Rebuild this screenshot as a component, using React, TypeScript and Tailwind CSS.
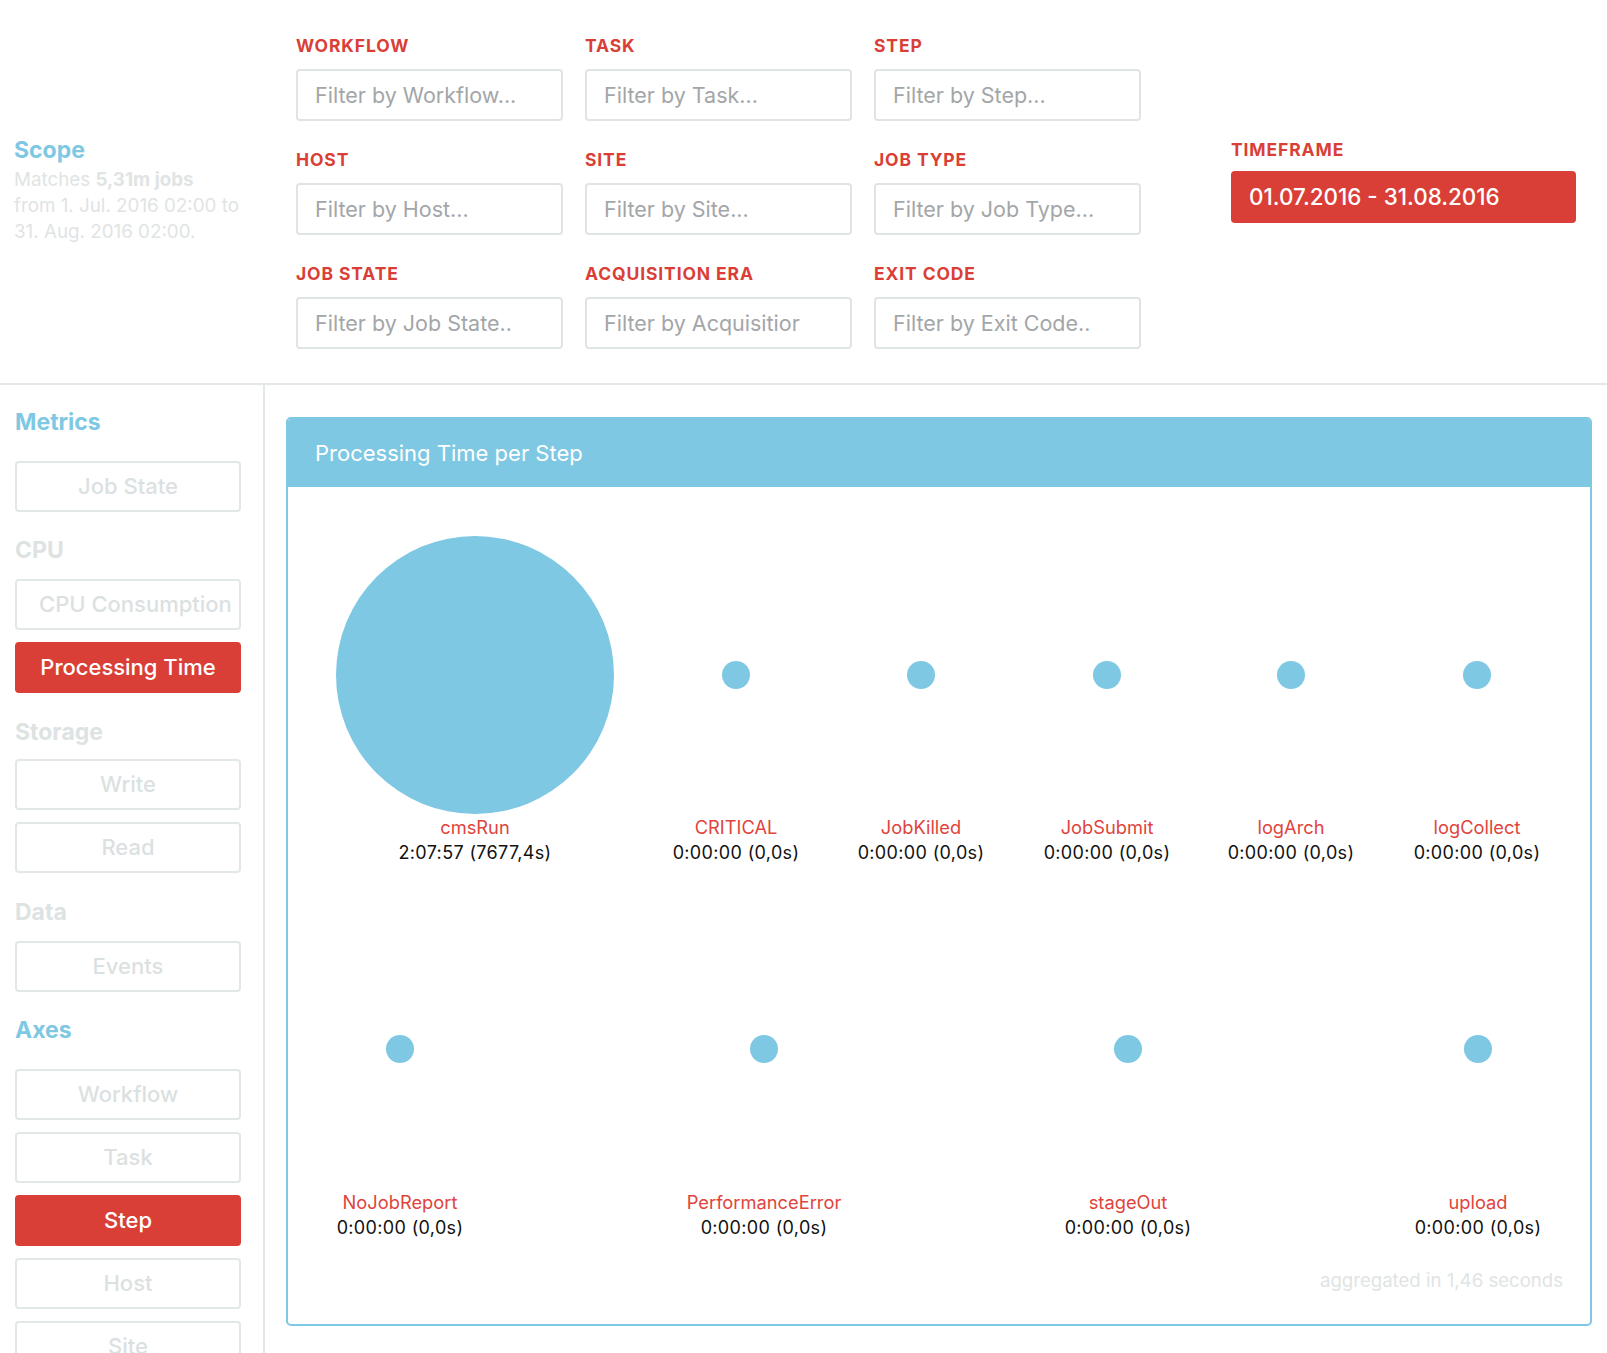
import React from "react";

function FilterField({ label, placeholder }: { label: string; placeholder: string }) {
  return (
    <div className="flex flex-col">
      <div className="h-[20px] leading-[20px] text-[17.5px] font-bold tracking-[0.05em] text-[#d93f36]">{label}</div>
      <div className="mt-[13px] h-[52px] w-[267px] rounded-[4px] border-2 border-[#dfe4e4] pl-[17px] pr-[43px] flex items-center">
        <div className="overflow-hidden whitespace-nowrap text-[21.5px] text-[#a3a6a8]">{placeholder}</div>
      </div>
    </div>
  );
}

function SideButton({ label, active = false, first = false }: { label: string; active?: boolean; first?: boolean }) {
  const base = first ? "" : "mt-[12px] ";
  return (
    <div
      className={
        base +
        (active
          ? "h-[51px] w-[226px] shrink-0 rounded-[4px] bg-[#d93f36] border-2 border-[#d93f36] text-white text-center leading-[47px] text-[22px] font-medium whitespace-nowrap overflow-hidden px-[22px]"
          : "h-[51px] w-[226px] shrink-0 rounded-[4px] border-2 border-[#e2e7e7] text-[#dbe1e1] text-center leading-[47px] text-[22px] font-medium whitespace-nowrap overflow-hidden px-[22px]")
      }
    >
      {label}
    </div>
  );
}

const row1 = [
  { x: 448, name: "CRITICAL" },
  { x: 633, name: "JobKilled" },
  { x: 819, name: "JobSubmit" },
  { x: 1003, name: "logArch" },
  { x: 1189, name: "logCollect" },
];

const row2 = [
  { x: 112, name: "NoJobReport" },
  { x: 476, name: "PerformanceError" },
  { x: 840, name: "stageOut" },
  { x: 1190, name: "upload" },
];

function Label({ x, y, name, value }: { x: number; y: number; name: string; value: string }) {
  return (
    <g>
      <text x={x} y={y} textAnchor="middle" dominantBaseline="central" fill="#e0443c" fontSize="18.3">
        {name}
      </text>
      <text x={x} y={y + 25} textAnchor="middle" dominantBaseline="central" fill="#111111" fontSize="18" letterSpacing="0.35">
        {value}
      </text>
    </g>
  );
}

export default function App() {
  return (
    <div className="w-[1607px] h-[1353px] overflow-hidden bg-white font-['Inter','Liberation_Sans',sans-serif]">
      {/* Top filter area */}
      <div className="flex h-[385px] border-b-2 border-[#e3e8e8]">
        <div className="w-[296px] pl-[14px] pt-[136px]">
          <div className="h-[28px] leading-[28px] text-[23px] font-bold text-[#7ec8e3]">Scope</div>
          <div className="mt-[3px] text-[18.8px] leading-[26px] text-[#dfe4e4]">
            <div>
              Matches <span className="font-bold">5,31m jobs</span>
            </div>
            <div>from 1. Jul. 2016 02:00 to</div>
            <div>31. Aug. 2016 02:00.</div>
          </div>
        </div>
        <div className="grid grid-cols-[267px_267px_267px] gap-x-[22px] gap-y-[29px] pt-[36px] content-start">
          <FilterField label="WORKFLOW" placeholder="Filter by Workflow..." />
          <FilterField label="TASK" placeholder="Filter by Task..." />
          <FilterField label="STEP" placeholder="Filter by Step..." />
          <FilterField label="HOST" placeholder="Filter by Host..." />
          <FilterField label="SITE" placeholder="Filter by Site..." />
          <FilterField label="JOB TYPE" placeholder="Filter by Job Type..." />
          <FilterField label="JOB STATE" placeholder="Filter by Job State.." />
          <FilterField label="ACQUISITION ERA" placeholder="Filter by Acquisitior" />
          <FilterField label="EXIT CODE" placeholder="Filter by Exit Code.." />
        </div>
        <div className="ml-[90px] pt-[140px]">
          <div className="h-[20px] leading-[20px] text-[17.5px] font-bold tracking-[0.05em] text-[#d93f36]">TIMEFRAME</div>
          <div className="mt-[11px] h-[52px] w-[345px] rounded-[4px] bg-[#d93f36] text-white text-[22.4px] font-medium flex items-center pl-[18px]">
            01.07.2016 - 31.08.2016
          </div>
        </div>
      </div>

      {/* Lower area */}
      <div className="flex">
        <div className="w-[265px] h-[968px] border-r-2 border-[#e3e8e8] pl-[15px] pt-[23px] flex flex-col">
          <div className="h-[28px] leading-[28px] text-[23px] font-bold text-[#7ec8e3]">Metrics</div>
          <div className="mt-[25px] flex flex-col">
            <SideButton label="Job State" first />
          </div>
          <div className="mt-[24px] h-[28px] leading-[28px] text-[23px] font-bold text-[#dde3e3]">CPU</div>
          <div className="mt-[15px] flex flex-col">
            <SideButton label="CPU Consumption" first />
            <SideButton label="Processing Time" active />
          </div>
          <div className="mt-[25px] h-[28px] leading-[28px] text-[23px] font-bold text-[#dde3e3]">Storage</div>
          <div className="mt-[13px] flex flex-col">
            <SideButton label="Write" first />
            <SideButton label="Read" />
          </div>
          <div className="mt-[25px] h-[28px] leading-[28px] text-[23px] font-bold text-[#dde3e3]">Data</div>
          <div className="mt-[15px] flex flex-col">
            <SideButton label="Events" first />
          </div>
          <div className="mt-[24px] h-[28px] leading-[28px] text-[23px] font-bold text-[#7ec8e3]">Axes</div>
          <div className="mt-[25px] flex flex-col">
            <SideButton label="Workflow" first />
            <SideButton label="Task" />
            <SideButton label="Step" active />
            <SideButton label="Host" />
            <SideButton label="Site" />
          </div>
        </div>

        <div className="flex-1 pl-[21px] pt-[32px] pr-[15px]">
          <div className="w-[1306px] h-[909px] rounded-[5px] border-2 border-[#7ec8e3] overflow-hidden flex flex-col">
            <div className="h-[68px] shrink-0 bg-[#7ec8e3] flex items-center pl-[27px] text-white text-[22px]">
              Processing Time per Step
            </div>
            <div className="flex-1">
              <svg width="1302" height="837" viewBox="0 0 1302 837" fontFamily="Inter, 'Liberation Sans', sans-serif">
                <circle cx={187} cy={188} r={139} fill="#7ec8e3" />
                {row1.map((d) => (
                  <circle key={d.name} cx={d.x} cy={188} r={14} fill="#7ec8e3" />
                ))}
                {row2.map((d) => (
                  <circle key={d.name} cx={d.x} cy={562} r={14} fill="#7ec8e3" />
                ))}
                <Label x={187} y={340} name="cmsRun" value="2:07:57 (7677,4s)" />
                {row1.map((d) => (
                  <Label key={d.name} x={d.x} y={340} name={d.name} value="0:00:00 (0,0s)" />
                ))}
                {row2.map((d) => (
                  <Label key={d.name} x={d.x} y={715} name={d.name} value="0:00:00 (0,0s)" />
                ))}
                <text x={1275} y={793} textAnchor="end" dominantBaseline="central" fill="#dfe4e4" fontSize="18.6">
                  aggregated in 1,46 seconds
                </text>
              </svg>
            </div>
          </div>
        </div>
      </div>
    </div>
  );
}
